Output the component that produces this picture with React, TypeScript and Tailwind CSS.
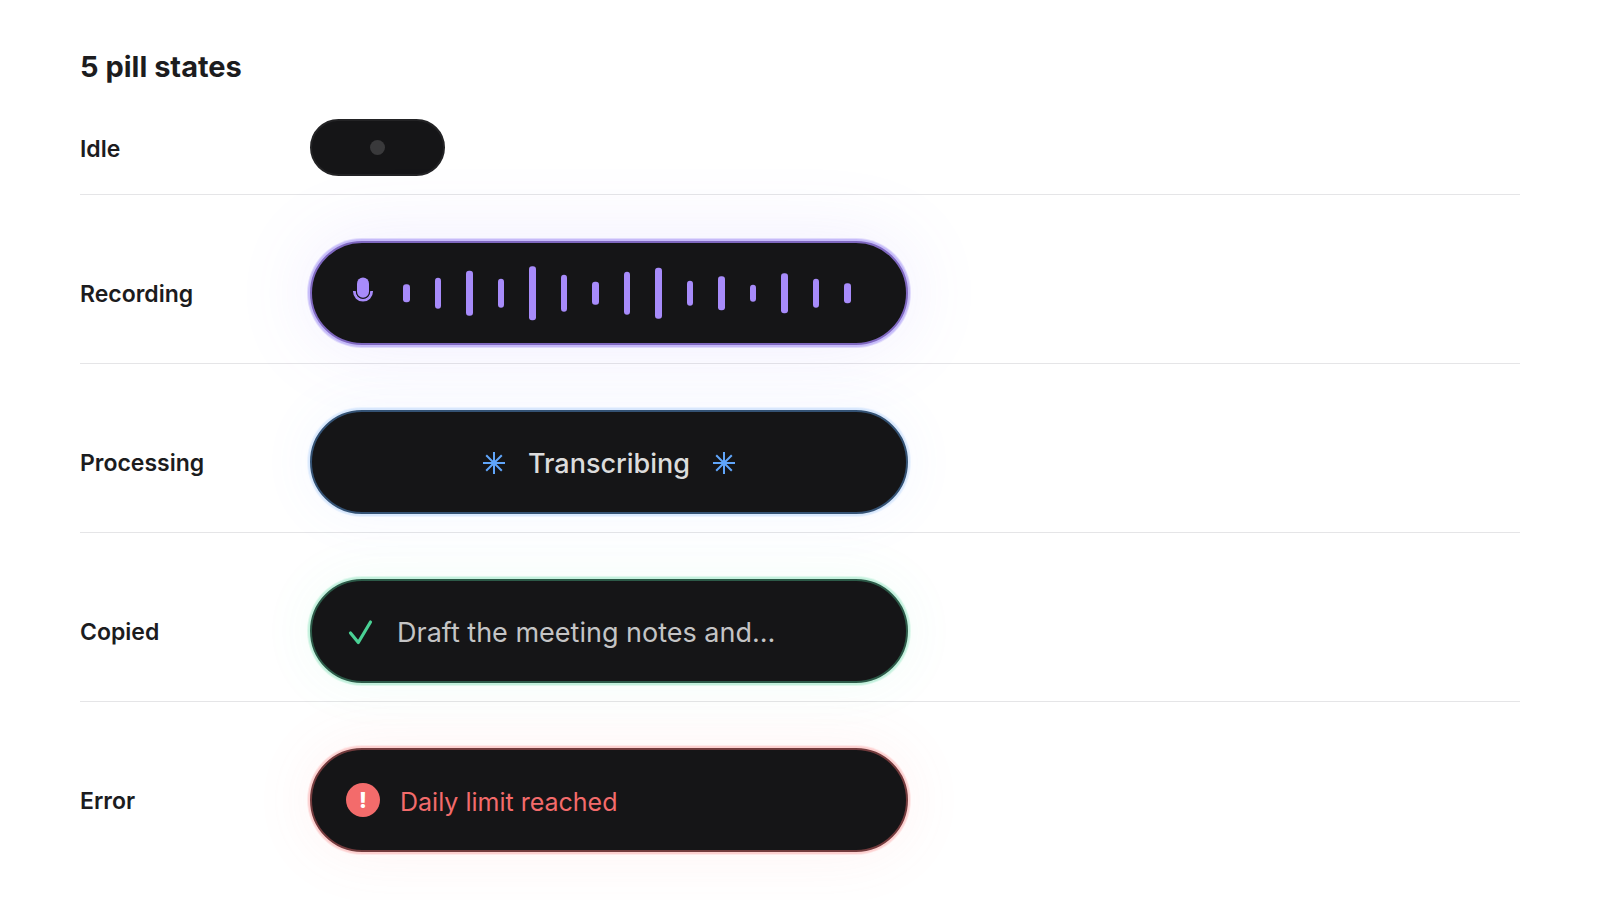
import { ReactNode } from "react";

type PillState = "idle" | "recording" | "processing" | "copied" | "error";

const BARS = [18, 31, 45, 29, 54, 37, 23, 43, 51, 25, 34, 17, 40, 29, 20];

const PILL: Record<PillState, string> = {
  idle: "h-[57px] w-[135px] justify-center border-[#232325]",
  recording:
    "h-[104px] w-[598px] gap-[30px] px-[41px] border-[#7f68c0] shadow-[0_0_0_2px_rgba(150,130,245,0.34),0_0_0_3px_rgba(150,130,245,0.25),0_0_80px_rgba(130,108,246,0.13)]",
  processing:
    "h-[104px] w-[598px] gap-[23px] px-[34px] justify-center border-[#345274] shadow-[0_0_0_2px_rgba(96,165,250,0.12),0_0_0_3px_rgba(96,165,250,0.1),0_0_56px_rgba(96,140,250,0.07)]",
  copied:
    "h-[104px] w-[598px] gap-6 px-[34px] border-[#2c5a48] shadow-[0_0_0_2px_rgba(74,209,149,0.18),0_0_0_3px_rgba(74,209,149,0.14),0_0_56px_rgba(74,209,149,0.07)]",
  error:
    "h-[104px] w-[598px] gap-5 px-[34px] border-[#733b3d] shadow-[0_0_0_2px_rgba(248,113,113,0.2),0_0_0_3px_rgba(248,113,113,0.12),0_0_64px_rgba(248,113,113,0.09)]",
};

function Pill({ state, children }: { state: PillState; children: ReactNode }) {
  return (
    <div className={`flex flex-shrink-0 items-center rounded-full border-2 bg-[#151517] ${PILL[state]}`}>
      {children}
    </div>
  );
}

function Row({ label, children }: { label: string; children: ReactNode }) {
  return (
    <li className="flex items-center border-b border-[#e5e5e7] pt-[46px] pb-[18px] first:pt-0 last:border-b-0">
      <h2 className="w-[230px] flex-shrink-0 pt-0.5 text-[23px] leading-8 font-semibold">{label}</h2>
      {children}
    </li>
  );
}

function Mic() {
  return (
    <svg width="20" height="32" viewBox="0 0 20 32" className="flex-shrink-0" aria-hidden="true">
      <path d="M1.4 14v.6a8.6 8.6 0 0 0 17.2 0V14" fill="none" stroke="#a78bfa" strokeWidth="2.8" />
      <rect x="4" y="0.5" width="12" height="20.2" rx="6" fill="#a78bfa" stroke="#151517" strokeWidth="2" paintOrder="stroke" />
    </svg>
  );
}

function Waveform() {
  return (
    <svg width="448" height="56" viewBox="0 0 448 56" fill="#a78bfa" aria-hidden="true">
      {BARS.map((h, i) => (
        <rect key={i} x={Math.ceil(i * 31.5)} y={28.2 - h / 2} width={i % 2 ? 6 : 7} height={h} rx="3" />
      ))}
    </svg>
  );
}

function Spark() {
  return (
    <svg width="22" height="24" viewBox="0 0 22 24" className="flex-shrink-0" stroke="#60a5fa" strokeWidth="2" aria-hidden="true">
      <path d="M11 2v22M0 13h22M3.2 5.2l15.6 15.6M18.8 5.2L3.2 20.8" />
      <circle cx="11" cy="13" r="1.5" fill="#60a5fa" />
    </svg>
  );
}

function Check() {
  return (
    <svg width="27" height="28" viewBox="0 0 27 28" className="flex-shrink-0" fill="none" aria-hidden="true">
      <path d="M4.5 16L12.3 25.5L24.5 5" stroke="#4ad195" strokeWidth="3.2" strokeLinecap="round" strokeLinejoin="round" />
    </svg>
  );
}

export default function App() {
  return (
    <main className="min-h-screen bg-white px-20 pt-12 pb-7 font-['Inter',sans-serif] text-[#1c1c1e]">
      <h1 className="mb-[33px] text-[29px] leading-[38px] font-bold">5 pill states</h1>

      <ul>
        <Row label="Idle">
          <Pill state="idle">
            <span className="h-[15px] w-[15px] rounded-full bg-[#39393b]" />
          </Pill>
        </Row>

        <Row label="Recording">
          <Pill state="recording">
            <Mic />
            <Waveform />
          </Pill>
        </Row>

        <Row label="Processing">
          <Pill state="processing">
            <Spark />
            <span className="pt-1 text-[27px] leading-9 font-medium text-[#dcdcdc]">Transcribing</span>
            <Spark />
          </Pill>
        </Row>

        <Row label="Copied">
          <Pill state="copied">
            <Check />
            <span className="pt-1 text-[27px] leading-9 text-[#c4c4c5]">Draft the meeting notes and…</span>
          </Pill>
        </Row>

        <Row label="Error">
          <Pill state="error">
            <span className="flex h-[34px] w-[34px] flex-shrink-0 items-center justify-center rounded-full bg-[#f36b6b] text-[22px] font-extrabold text-white">
              !
            </span>
            <span className="pt-1 text-[25px] leading-9 text-[#f36b6b]">Daily limit reached</span>
          </Pill>
        </Row>
      </ul>
    </main>
  );
}
